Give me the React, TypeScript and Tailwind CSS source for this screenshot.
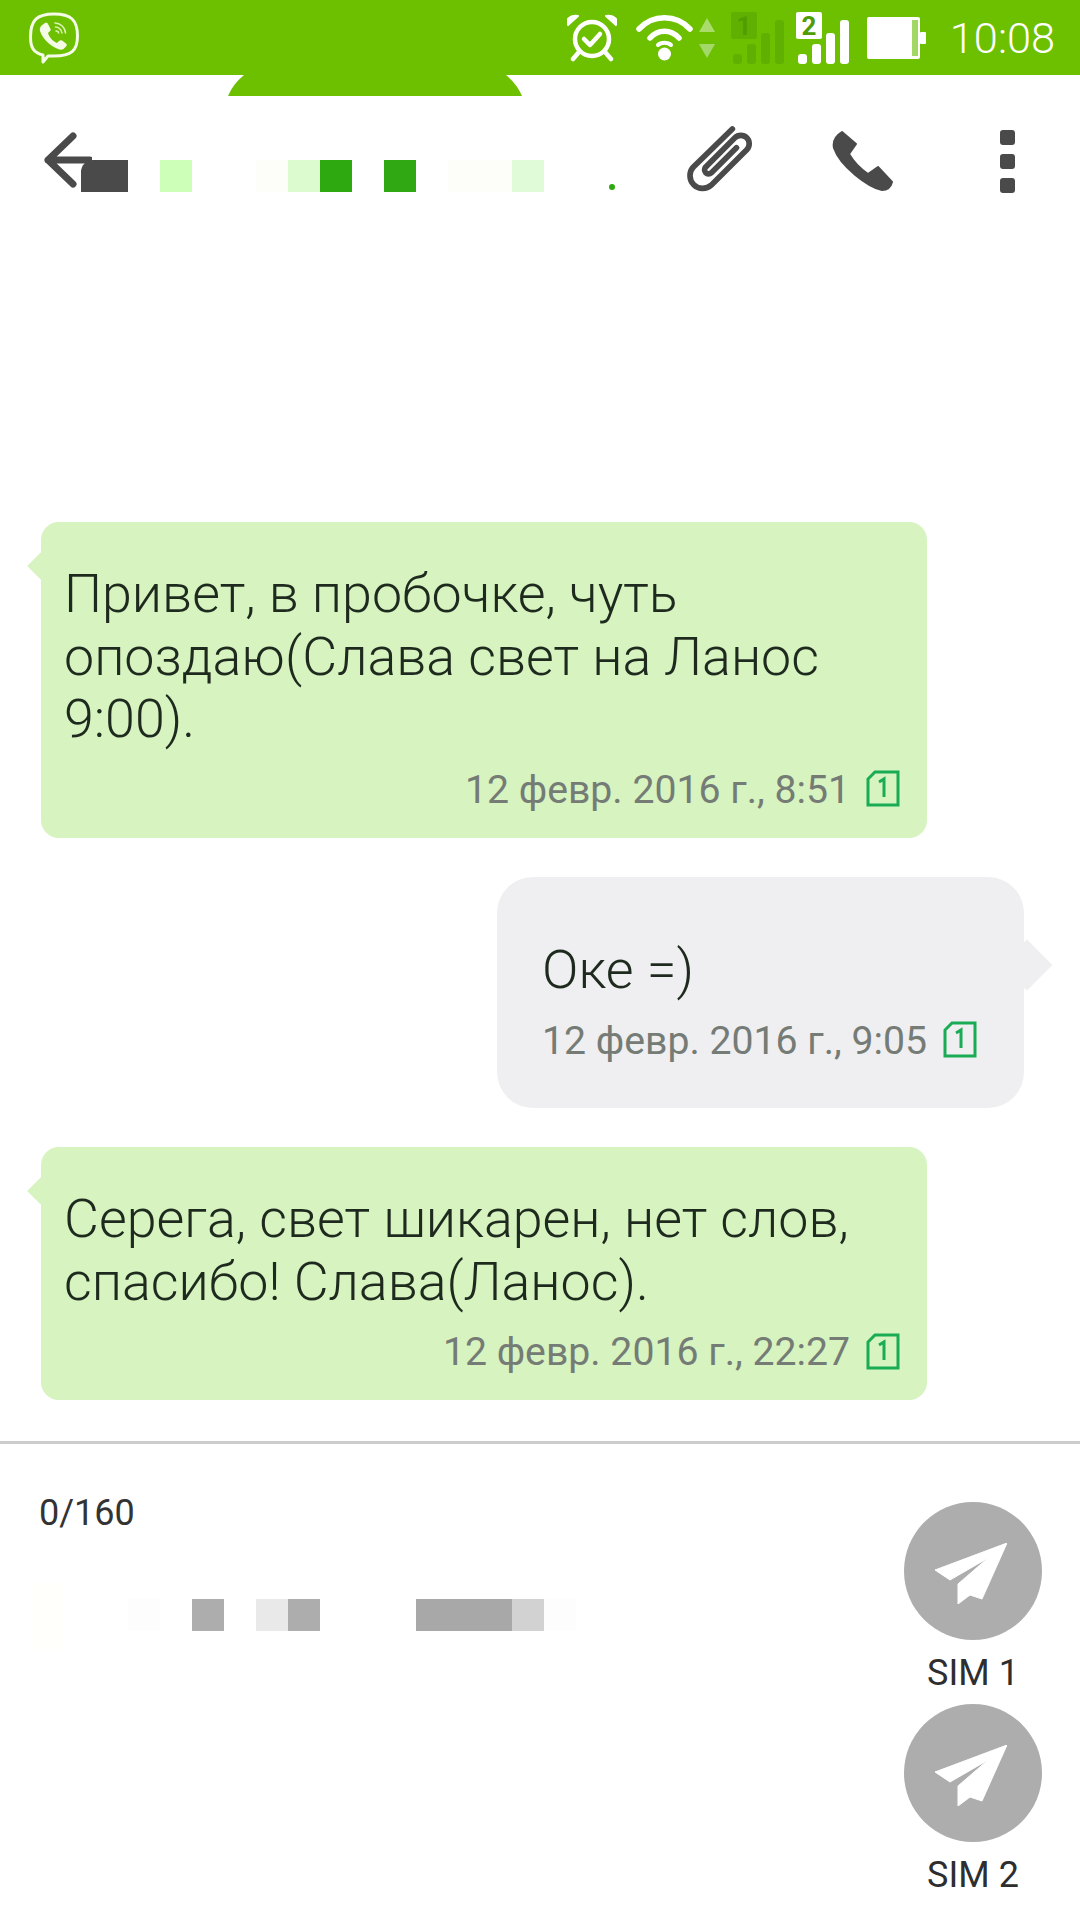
const font = "font-['Roboto',sans-serif]";

function ViberIcon() {
  return (
    <svg width="50" height="52" viewBox="0 0 50 52" fill="none" className="shrink-0">
      <path
        d="M14 43 C5 41 1.5 36 1.5 25 C1.5 8 8 2 25 2 C42 2 48.5 8 48.5 24 C48.5 39 42 44 25 44 C22 44 20 44 19 44 L14 50 Z"
        stroke="#f4fbe6"
        strokeWidth="3"
        strokeLinejoin="round"
      />
      <path
        d="M12 14 L16 11 C17.5 10.5 18.5 11 19 12 L21.5 17 C22 18 21.5 19 20.5 19.5 L19 21 C20 25 24 29.5 28 31 L30 29 C31 28 32 28 33 28.5 L37 31.5 C38 32.5 38 33.5 37 34.5 L34.5 37 C33 38 31 38 29 37 C20 33 14 27 11 19 C10.5 17 11 15.5 12 14 Z"
        fill="#f4fbe6"
      />
      <path d="M26 11 C31 11 36 15 36.5 21 M26.5 15 C29.5 15 32.5 17.5 33 21 M27 19 C28.5 19 29.5 20 29.5 21" stroke="#dff2bd" strokeWidth="1.5" strokeLinecap="round" />
    </svg>
  );
}

function AlarmIcon() {
  return (
    <svg width="50" height="48" viewBox="0 0 50 48" fill="none" className="shrink-0">
      <circle cx="25" cy="25" r="17" stroke="white" strokeWidth="4.5" />
      <path d="M17 25 L23 31 L33 20" stroke="white" strokeWidth="4.5" strokeLinecap="round" strokeLinejoin="round" />
      <path d="M1 11 L11 2 Q5 1 1 5 Z M49 11 L39 2 Q45 1 49 5 Z" fill="white" stroke="white" strokeWidth="2" strokeLinejoin="round" />
      <path d="M12 38 L6 45 M38 38 L44 45" stroke="white" strokeWidth="4.5" strokeLinecap="round" />
    </svg>
  );
}

function WifiIcon() {
  return (
    <svg width="57" height="48" viewBox="0 0 57 48" fill="none" className="shrink-0">
      <path d="M3 15 C17 0 40 0 54 15" stroke="white" strokeWidth="5.5" strokeLinecap="round" />
      <path d="M14 24 C22 15 35 15 43 24" stroke="white" strokeWidth="5.5" strokeLinecap="round" />
      <circle cx="28.5" cy="40" r="6.5" fill="white" />
      <path d="M22 31 C25 28 32 28 35 31" stroke="white" strokeWidth="4" strokeLinecap="round" />
    </svg>
  );
}

function TrafficArrows() {
  return (
    <svg width="16" height="40" viewBox="0 0 16 40" className="shrink-0">
      <path d="M8 0 L16 14 H0 Z" fill="#a9dc6b" />
      <path d="M8 40 L16 26 H0 Z" fill="#a3d968" />
    </svg>
  );
}

function Signal({ num, active }: { num: string; active: boolean }) {
  const color = active ? "#ffffff" : "#5fb000";
  const textColor = active ? "#4f9c05" : "#4f9e00";
  return (
    <svg width="53" height="52" viewBox="0 0 53 52" className="shrink-0">
      <rect x="0" y="0" width="26" height="27" rx="2" fill={color} />
      <text x="13" y="23" textAnchor="middle" fontFamily="Roboto, sans-serif" fontWeight="700" fontSize="26" fill={textColor}>
        {num}
      </text>
      <rect x="2" y="42" width="9" height="10" rx="3" fill={color} />
      <rect x="16" y="32" width="9" height="20" rx="3" fill={color} />
      <rect x="30" y="21" width="9" height="31" rx="3" fill={color} />
      <rect x="44" y="8" width="9" height="44" rx="3" fill={color} />
    </svg>
  );
}

function BatteryIcon() {
  return (
    <svg width="59" height="42" viewBox="0 0 59 42" className="shrink-0">
      <rect x="0" y="0" width="53" height="42" rx="2" fill="white" />
      <rect x="45" y="3" width="6" height="36" fill="#a2d766" />
      <rect x="53" y="15" width="6" height="12" rx="1" fill="white" />
    </svg>
  );
}

function BackIcon() {
  return (
    <svg width="48" height="56" viewBox="0 0 48 56" fill="none" className="shrink-0">
      <path d="M29 4 L4 28 L29 52 M4 28 H46" stroke="#4a4a4a" strokeWidth="7" strokeLinecap="round" strokeLinejoin="round" />
    </svg>
  );
}

function ClipIcon() {
  return (
    <svg width="68" height="68" viewBox="0 0 66 66" fill="none" className="shrink-0">
      <path
        d="M44 3 L6 40 A12.4 12.4 0 0 0 23.5 57.5 L58 23 A8.1 8.1 0 0 0 46.5 11.5 L18 40 A3.9 3.9 0 0 0 23.5 45.5 L48 21"
        stroke="#4a4a4a"
        strokeWidth="5.5"
        strokeLinecap="round"
      />
    </svg>
  );
}

function PhoneIcon() {
  return (
    <svg width="62" height="62" viewBox="0 0 62 62" className="shrink-0">
      <path
        d="M10 2 L24 14 L17 24 Q24 36 36 44 L46 37 L60 52 Q58 60 50 60 C36 57 8 36 2 18 Q0 8 10 2 Z"
        fill="#4a4a4a"
        stroke="#4a4a4a"
        strokeWidth="2"
        strokeLinejoin="round"
      />
    </svg>
  );
}

function SimBadge() {
  return (
    <svg width="34" height="37" viewBox="0 0 34 37" fill="none" className="-mt-[2px] shrink-0">
      <path d="M9 2 H32 V35 H2 V9 Z" stroke="#1aab55" strokeWidth="3" strokeLinejoin="miter" />
      <path d="M13 12 L18 9 V27" stroke="#1aab55" strokeWidth="3" />
    </svg>
  );
}

function PlaneIcon() {
  return (
    <svg width="72" height="61" viewBox="0 0 72 61" className="mt-[4px] mr-[4px]">
      <path d="M72 0 L0 27 L15 37 L53 15 L23 41 V61 L35 52 L47 56 Z" fill="white" stroke="white" strokeWidth="1" strokeLinejoin="round" />
    </svg>
  );
}

function Pixels({ cells }: { cells: string[] }) {
  return (
    <div className="flex h-8">
      {cells.map((c, i) => (
        <div key={i} className={c} />
      ))}
    </div>
  );
}

function Bubble({
  side,
  date,
  className,
  children,
}: {
  side: "left" | "right";
  date: string;
  className: string;
  children: React.ReactNode;
}) {
  const left = side === "left";
  return (
    <div className={`relative ${className}`}>
      {left ? (
        <div className="absolute left-[-8px] top-[30px] h-[28px] w-[28px] rotate-45 bg-[#d6f3c0]" />
      ) : (
        <div className="absolute right-[-21px] top-[70px] h-[36px] w-[36px] rotate-45 bg-[#efeef0]" />
      )}
      <div className="relative text-[53.75px] leading-[62.5px] font-light text-[#1e2a1e]">{children}</div>
      <div className={`relative mt-[14px] flex items-center gap-[16px] ${left ? "justify-end" : "justify-start"}`}>
        <span className="text-[39.2px] leading-[50px] font-normal text-[#757b75]">{date}</span>
        <SimBadge />
      </div>
    </div>
  );
}

function SimButton({ label }: { label: string }) {
  return (
    <div className="flex flex-col items-center">
      <div className="flex h-[138px] w-[138px] items-center justify-center rounded-full bg-[#adadad]">
        <PlaneIcon />
      </div>
      <span className="mt-[12px] text-[36px] leading-[42px] text-[#2e2e2e]">{label}</span>
    </div>
  );
}

export default function App() {
  return (
    <div className={`relative flex h-[1920px] w-[1080px] flex-col overflow-hidden bg-white ${font}`}>
      {/* status bar */}
      <div className="flex h-[75px] shrink-0 items-center bg-[#6cc000] pr-[25px] pl-[29px]">
        <ViberIcon />
        <div className="ml-auto flex items-center">
          <AlarmIcon />
          <div className="ml-[19px]">
            <WifiIcon />
          </div>
          <div className="ml-[6px]">
            <TrafficArrows />
          </div>
          <div className="ml-[16px]">
            <Signal num="1" active={false} />
          </div>
          <div className="ml-[12px]">
            <Signal num="2" active />
          </div>
          <div className="ml-[18px]">
            <BatteryIcon />
          </div>
          <span className="mt-[2px] ml-[24px] text-[43.3px] leading-none font-light text-white">10:08</span>
        </div>
      </div>

      {/* bit of the notification pill poking out of the status bar */}
      <svg width="298" height="21" viewBox="0 0 298 21" className="absolute top-[75px] left-[226px]">
        <path d="M18 0 Q7 9 2 21 H296 Q291 9 280 0 Z" fill="#6cc000" />
      </svg>

      {/* header */}
      <div className="flex h-[155px] shrink-0 pt-[57px] pl-[44px]">
        <BackIcon />
        <div className="mt-[28px] -ml-[11px]">
          <Pixels
            cells={[
              "w-[47px] rounded-tl-[12px] bg-[#4a4a4a]",
              "w-8",
              "w-8 bg-[#ceffb8]",
              "w-[64px]",
              "w-8 bg-[#fdfdf9]",
              "w-8 bg-[#dcfcd0]",
              "w-8 bg-[#2fa910]",
              "w-8",
              "w-8 bg-[#30a814]",
              "w-8",
              "w-[64px] bg-[#fdfdfa]",
              "w-8 bg-[#e0fbd8]",
            ]}
          />
        </div>
        <div className="mt-[52px] ml-[65px] h-[6px] w-[6px] rounded-full bg-[#2fa910]" />
        <div className="mt-[-6px] ml-[72px]">
          <ClipIcon />
        </div>
        <div className="mt-[-2px] ml-[77px]">
          <PhoneIcon />
        </div>
        <div className="mt-[-2px] ml-[106px] flex flex-col gap-[9px]">
          <div className="h-[15px] w-[15px] rounded-[3px] bg-[#4a4a4a]" />
          <div className="h-[15px] w-[15px] rounded-[3px] bg-[#4a4a4a]" />
          <div className="h-[15px] w-[15px] rounded-[3px] bg-[#4a4a4a]" />
        </div>
      </div>

      {/* messages */}
      <div className="flex flex-1 flex-col pt-[292px]">
        <Bubble
          side="left"
          date="12 февр. 2016 г., 8:51"
          className="ml-[41px] h-[316px] w-[886px] rounded-[18px] bg-[#d6f3c0] pt-[41px] pr-[27px] pl-[23px]"
        >
          Привет, в пробочке, чуть
          <br />
          опоздаю(Слава свет на Ланос
          <br />
          9:00).
        </Bubble>
        <Bubble
          side="right"
          date="12 февр. 2016 г., 9:05"
          className="mt-[39px] ml-[497px] h-[231px] w-[527px] rounded-[36px] bg-[#efeef0] pt-[62px] pl-[45px]"
        >
          Оке =)
        </Bubble>
        <Bubble
          side="left"
          date="12 февр. 2016 г., 22:27"
          className="mt-[39px] ml-[41px] h-[253px] w-[886px] rounded-[18px] bg-[#d6f3c0] pt-[41px] pr-[27px] pl-[23px]"
        >
          Серега, свет шикарен, нет слов,
          <br />
          спасибо! Слава(Ланос).
        </Bubble>
      </div>

      {/* composer */}
      <div className="flex h-[479px] shrink-0 border-t-[3px] border-[#cccccc]">
        <div className="flex flex-1 flex-col pl-[39px]">
          <span className="mt-[49px] text-[36px] leading-[40px] text-[#333333]">0/160</span>
          <div className="mt-[66px] -ml-[7px]">
            <Pixels
              cells={[
                "-mt-[16px] h-[68px] w-8 bg-[#fffffb]",
                "w-[64px]",
                "w-8 bg-[#fdfdfd]",
                "w-8",
                "w-8 bg-[#adadad]",
                "w-8",
                "w-8 bg-[#e9e9e9]",
                "w-8 bg-[#adadad]",
                "w-[96px]",
                "w-[96px] bg-[#a8a8a8]",
                "w-8 bg-[#d2d2d2]",
                "w-8 bg-[#fdfdfd]",
              ]}
            />
          </div>
        </div>
        <div className="flex flex-col gap-[10px] pt-[58px] pr-[38px]">
          <SimButton label="SIM 1" />
          <SimButton label="SIM 2" />
        </div>
      </div>
    </div>
  );
}
